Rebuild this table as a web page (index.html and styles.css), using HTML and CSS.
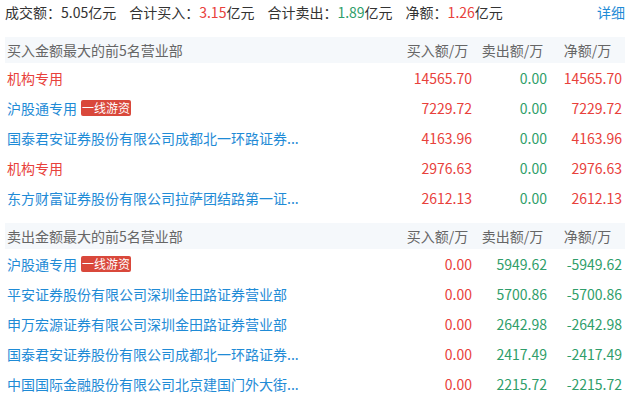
FILE: index.html
```html
<!DOCTYPE html>
<html lang="zh-CN">
<head>
<meta charset="utf-8">
<title>龙虎榜</title>
<link rel="stylesheet" href="styles.css">
</head>
<body>
<div class="page">
  <div class="summary">
    <div class="stats">
      <span class="stat">成交额：5.05亿元</span>
      <span class="stat">合计买入：<span class="up">3.15</span>亿元</span>
      <span class="stat">合计卖出：<span class="down">1.89</span>亿元</span>
      <span class="stat">净额：<span class="up">1.26</span>亿元</span>
    </div>
    <a class="more">详细</a>
  </div>

  <div class="section">
    <div class="row head">
      <div class="name">买入金额最大的前5名营业部</div>
      <div class="col">买入额/万</div>
      <div class="col">卖出额/万</div>
      <div class="col">净额/万</div>
    </div>
    <div class="row">
      <div class="name inst">机构专用</div>
      <div class="num up">14565.70</div>
      <div class="num down">0.00</div>
      <div class="num up">14565.70</div>
    </div>
    <div class="row">
      <div class="name">沪股通专用<span class="tag">一线游资</span></div>
      <div class="num up">7229.72</div>
      <div class="num down">0.00</div>
      <div class="num up">7229.72</div>
    </div>
    <div class="row">
      <div class="name">国泰君安证券股份有限公司成都北一环路证券...</div>
      <div class="num up">4163.96</div>
      <div class="num down">0.00</div>
      <div class="num up">4163.96</div>
    </div>
    <div class="row">
      <div class="name inst">机构专用</div>
      <div class="num up">2976.63</div>
      <div class="num down">0.00</div>
      <div class="num up">2976.63</div>
    </div>
    <div class="row">
      <div class="name">东方财富证券股份有限公司拉萨团结路第一证...</div>
      <div class="num up">2612.13</div>
      <div class="num down">0.00</div>
      <div class="num up">2612.13</div>
    </div>
  </div>

  <div class="section">
    <div class="row head">
      <div class="name">卖出金额最大的前5名营业部</div>
      <div class="col">买入额/万</div>
      <div class="col">卖出额/万</div>
      <div class="col">净额/万</div>
    </div>
    <div class="row">
      <div class="name">沪股通专用<span class="tag">一线游资</span></div>
      <div class="num up">0.00</div>
      <div class="num down">5949.62</div>
      <div class="num down">-5949.62</div>
    </div>
    <div class="row">
      <div class="name">平安证券股份有限公司深圳金田路证券营业部</div>
      <div class="num up">0.00</div>
      <div class="num down">5700.86</div>
      <div class="num down">-5700.86</div>
    </div>
    <div class="row">
      <div class="name">申万宏源证券有限公司深圳金田路证券营业部</div>
      <div class="num up">0.00</div>
      <div class="num down">2642.98</div>
      <div class="num down">-2642.98</div>
    </div>
    <div class="row">
      <div class="name">国泰君安证券股份有限公司成都北一环路证券...</div>
      <div class="num up">0.00</div>
      <div class="num down">2417.49</div>
      <div class="num down">-2417.49</div>
    </div>
    <div class="row">
      <div class="name">中国国际金融股份有限公司北京建国门外大街...</div>
      <div class="num up">0.00</div>
      <div class="num down">2215.72</div>
      <div class="num down">-2215.72</div>
    </div>
  </div>
</div>
</body>
</html>
```

FILE: styles.css
```css
* { box-sizing: border-box; }
html, body {
  margin: 0;
  padding: 0;
  background: #fff;
}
body {
  font-family: "Noto Sans CJK SC", "Microsoft YaHei", sans-serif;
  font-size: 14px;
  color: #333;
}
.page {
  padding: 0 5px;
}
.summary {
  display: flex;
  justify-content: space-between;
  align-items: center;
  height: 24px;
  line-height: 24px;
  margin-bottom: 13px;
}
.stats {
  display: flex;
}
.stat {
  margin-right: 13px;
  white-space: nowrap;
}
.more {
  color: #1f8bd6;
  cursor: pointer;
}
.section + .section {
  margin-top: 10px;
}
.row {
  display: grid;
  grid-template-columns: 1fr 75px 75px 75px;
  height: 30px;
  align-items: center;
  white-space: nowrap;
}
.row.head {
  height: 26px;
  background: #f5f8fb;
  color: #666;
}
.name {
  padding-left: 2px;
  color: #1f8bd6;
  overflow: hidden;
  display: flex;
  align-items: center;
}
.head .name { color: #666; }
.name.inst { color: #e8413b; }
.col {
  text-align: center;
}
.num {
  text-align: right;
  padding-right: 3px;
}
.up { color: #e8413b; }
.down { color: #2f9e6a; }
.tag {
  display: inline-block;
  margin-left: 4px;
  padding: 0 1px;
  height: 16px;
  line-height: 16px;
  font-size: 12px;
  color: #fff;
  background: #d9483b;
  border-radius: 2px;
}
```
